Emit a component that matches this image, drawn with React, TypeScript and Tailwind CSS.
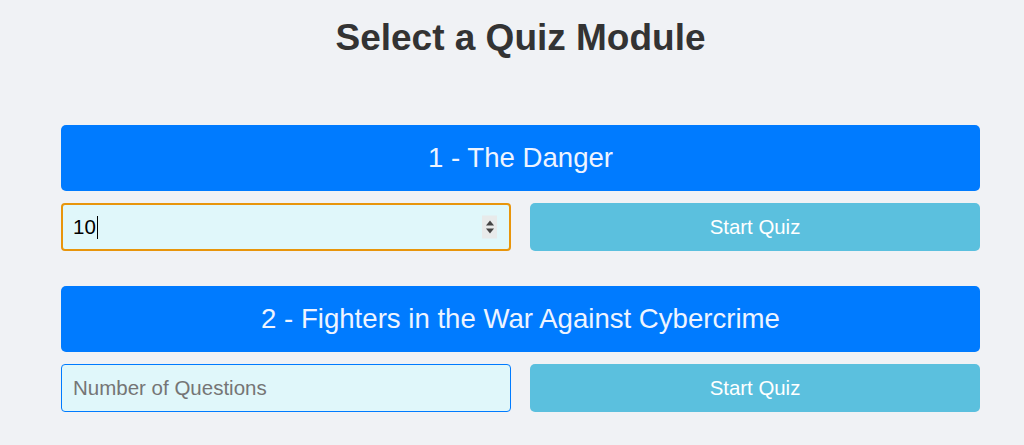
import React from "react";

const font = { fontFamily: '"Liberation Sans", Arial, sans-serif' };

function Module({ title, focused }: { title: string; focused?: boolean }) {
  return (
    <div className="flex flex-col">
      <div className="h-[66px] rounded-[5px] bg-[#007bff] flex items-center justify-center text-[27.6px] text-[#eef4ff]">
        {title}
      </div>
      <div className="mt-[12px] grid grid-cols-2 gap-[19px]">
        {focused ? (
          <div className="relative min-w-0 h-[48px] rounded-[4px] border-2 border-[#e8950b] bg-[#e0f7fa] flex items-center pl-[10px] text-[20.5px] text-black">
            <span>10</span>
            <span className="inline-block w-[1px] h-[23px] bg-black ml-[1px]" />
            <div className="absolute right-[12px] top-1/2 -translate-y-1/2 w-[15px] h-[23px] bg-[#e8eaea] flex flex-col items-center justify-center gap-[3px]">
              <div className="w-0 h-0 border-l-[4px] border-r-[4px] border-b-[5px] border-l-transparent border-r-transparent border-b-[#444]" />
              <div className="w-0 h-0 border-l-[4px] border-r-[4px] border-t-[5px] border-l-transparent border-r-transparent border-t-[#444]" />
            </div>
          </div>
        ) : (
          <input
            type="text"
            placeholder="Number of Questions"
            className="min-w-0 w-full h-[48px] rounded-[4px] border border-[#007bff] bg-[#e0f7fa] px-[11px] text-[20.5px] outline-none placeholder:text-[#757575]"
            style={font}
          />
        )}
        <button
          className="min-w-0 h-[48px] rounded-[5px] bg-[#5bc0de] text-white text-[20.4px]"
          style={font}
        >
          Start Quiz
        </button>
      </div>
    </div>
  );
}

export default function App() {
  return (
    <div className="min-h-[445px] bg-[#f0f2f5] pl-[61px] pr-[44px]" style={font}>
      <h1 className="pt-[18px] text-center text-[37px] font-bold text-[#333] leading-[40px]">
        Select a Quiz Module
      </h1>
      <div className="mt-[67px] flex flex-col gap-[35px]">
        <Module title="1 - The Danger" focused />
        <Module title="2 - Fighters in the War Against Cybercrime" />
      </div>
    </div>
  );
}
